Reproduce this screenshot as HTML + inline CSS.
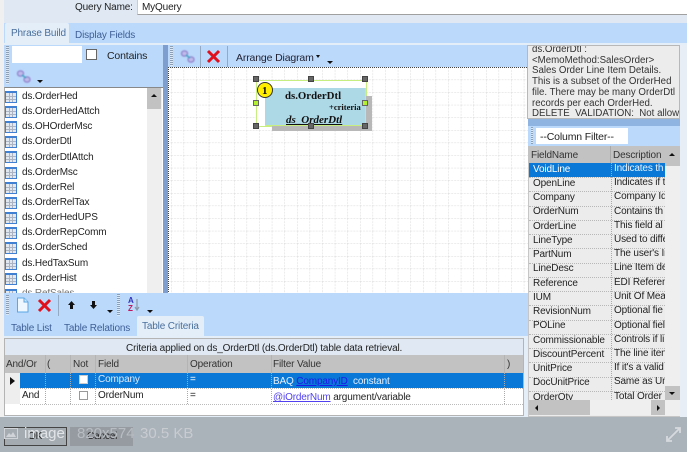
<!DOCTYPE html>
<html><head><meta charset="utf-8">
<style>
html,body{margin:0;padding:0;width:687px;height:452px;overflow:hidden;background:#e8eef5}
*{box-sizing:border-box}
body{font-family:"Liberation Sans",sans-serif;font-size:10px;color:#222;position:relative}
.a{position:absolute}
.t{position:absolute;white-space:nowrap;line-height:12px;letter-spacing:-.15px;filter:blur(.25px)}
.ti{position:absolute;left:5px;width:12px;height:12px;border:1px solid #3f80d2;border-top-width:2px;background:
 linear-gradient(#aab4c2,#aab4c2) 0 3px/100% 1px no-repeat,linear-gradient(#aab4c2,#aab4c2) 0 6px/100% 1px no-repeat,
 linear-gradient(#aab4c2,#aab4c2) 3px 0/1px 100% no-repeat,linear-gradient(#aab4c2,#aab4c2) 6px 0/1px 100% no-repeat,#e2e8f0}
.h{position:absolute;width:6px;height:6px;background:#666;border:1px solid #444}
.rl{position:absolute;left:529px;width:136px;height:1px;border-top:1px dotted #b8b8b8}
.dv{position:absolute;border-left:1px dotted #aaa}
.drop{position:absolute;width:0;height:0;border-left:3px solid transparent;border-right:3px solid transparent;border-top:3px solid #111}
.hd{position:absolute;background:#c2c2c2}
.s{font-family:"Liberation Serif",serif;font-weight:bold;color:#111;letter-spacing:0}
.o{font-size:15px;line-height:16px;letter-spacing:0}
a{color:#1a1ae6;text-decoration:underline}
.chain{filter:blur(.4px)}
</style></head><body>

<!-- top area -->
<div class="a" style="left:0;top:0;width:4px;height:417px;background:#f0f0f0"></div>
<div class="a" style="left:4px;top:0;width:683px;height:23px;background:#dfe8f3"></div>
<div class="a" style="left:137px;top:0;width:550px;height:15px;background:#fff;border-bottom:1px solid #a0a0a0;border-left:1px solid #ccc"></div>
<div class="t" style="left:75px;top:2px">Query Name:</div>
<div class="t" style="left:142px;top:2px">MyQuery</div>

<!-- tab band -->
<div class="a" style="left:4px;top:23px;width:683px;height:20px;background:#bbd9fb"></div>
<div class="a" style="left:5px;top:23px;width:64px;height:21px;background:#e3eef9;border-radius:2px 2px 0 0"></div>
<div class="t" style="left:11px;top:28px;color:#4a6f9c">Phrase Build</div>
<div class="t" style="left:75px;top:30px;color:#3f5f96">Display Fields</div>
<div class="a" style="left:4px;top:43px;width:683px;height:2px;background:#e3eef9"></div>

<!-- left panel toolbar -->
<div class="a" style="left:4px;top:45px;width:160px;height:43px;background:#bbd9fb"></div>
<div class="a" style="left:6px;top:46px;width:3px;height:38px;background:repeating-linear-gradient(#8d9fb4 0 1px,#dbe8f8 1px 2px)"></div>
<div class="a" style="left:12px;top:46px;width:70px;height:17px;background:#fff"></div>
<div class="a" style="left:86px;top:49px;width:11px;height:11px;background:#fff;border:1px solid #666"></div>
<div class="t" style="left:107px;top:50px;font-size:10.5px">Contains</div>
<svg class="a chain" style="left:16px;top:69px" width="16" height="15" viewBox="0 0 16 15"><g fill="#c0bbea" stroke="#9a92d4" stroke-width="1.6"><ellipse cx="4.5" cy="4.5" rx="3" ry="2.6"/><ellipse cx="11" cy="10.500" rx="3" ry="2.6"/></g><path d="M6 6l4 3" stroke="#48a8c8" stroke-width="1.6"/></svg>
<div class="drop" style="left:37px;top:80px"></div>

<!-- table list -->
<div class="a" style="left:4px;top:87px;width:160px;height:206px;background:#fff;border-top:1px solid #888;border-left:1px solid #aaa"></div>
<div class="a" style="left:147px;top:88px;width:15px;height:205px;background:#efefef"></div>
<div class="a" style="left:147px;top:88px;width:14px;height:21px;background:#c2c2c2"></div>
<div class="a" style="left:151px;top:94px;border-left:3px solid transparent;border-right:3px solid transparent;border-bottom:3px solid #111"></div>
<div class="ti" style="top:91px"></div><div class="t" style="left:22px;top:91px">ds.OrderHed</div>
<div class="ti" style="top:106px"></div><div class="t" style="left:22px;top:106px">ds.OrderHedAttch</div>
<div class="ti" style="top:121px"></div><div class="t" style="left:22px;top:121px">ds.OHOrderMsc</div>
<div class="ti" style="top:136px"></div><div class="t" style="left:22px;top:136px">ds.OrderDtl</div>
<div class="ti" style="top:151px"></div><div class="t" style="left:22px;top:152px">ds.OrderDtlAttch</div>
<div class="ti" style="top:167px"></div><div class="t" style="left:22px;top:167px">ds.OrderMsc</div>
<div class="ti" style="top:182px"></div><div class="t" style="left:22px;top:182px">ds.OrderRel</div>
<div class="ti" style="top:197px"></div><div class="t" style="left:22px;top:197px">ds.OrderRelTax</div>
<div class="ti" style="top:212px"></div><div class="t" style="left:22px;top:212px">ds.OrderHedUPS</div>
<div class="ti" style="top:227px"></div><div class="t" style="left:22px;top:227px">ds.OrderRepComm</div>
<div class="ti" style="top:242px"></div><div class="t" style="left:22px;top:242px">ds.OrderSched</div>
<div class="ti" style="top:258px"></div><div class="t" style="left:22px;top:258px">ds.HedTaxSum</div>
<div class="ti" style="top:273px"></div><div class="t" style="left:22px;top:273px">ds.OrderHist</div>
<div class="a" style="left:5px;top:289px;width:142px;height:4px;overflow:hidden"><div class="ti" style="left:0;top:0"></div><div class="t" style="left:17px;top:-1px;color:#777">ds.RefSales</div></div>

<!-- splitter -->
<div class="a" style="left:163px;top:45px;width:5px;height:248px;background:#7f9ed0"></div>

<!-- diagram toolbar -->
<div class="a" style="left:168px;top:45px;width:360px;height:22px;background:#bbd9fb"></div>
<div class="a" style="left:170px;top:46px;width:3px;height:20px;background:repeating-linear-gradient(#8d9fb4 0 1px,#dbe8f8 1px 2px)"></div>
<svg class="a chain" style="left:180px;top:49px" width="16" height="15" viewBox="0 0 16 15"><g fill="#c0bbea" stroke="#9a92d4" stroke-width="1.6"><ellipse cx="4.5" cy="4.5" rx="3" ry="2.6"/><ellipse cx="11" cy="10.500" rx="3" ry="2.6"/></g><path d="M6 6l4 3" stroke="#48a8c8" stroke-width="1.6"/></svg>
<div class="a" style="left:200px;top:46px;width:1px;height:21px;background:#93a9c4"></div>
<svg class="a" style="left:206px;top:49px" width="15" height="15" viewBox="0 0 15 15"><path d="M2 2L13 13M13 2L2 13" stroke="#e0101c" stroke-width="3"/></svg>
<div class="a" style="left:227px;top:46px;width:1px;height:21px;background:#93a9c4"></div>
<div class="t" style="left:236px;top:52px;font-size:10.5px;color:#223">Arrange Diagram</div>
<div class="drop" style="left:316px;top:55px;border-left-width:2.5px;border-right-width:2.5px"></div>
<div class="drop" style="left:327px;top:61px"></div>

<!-- diagram -->
<svg class="a" style="left:168px;top:67px" width="360" height="226"><defs><pattern id="g" x="3" y="0" width="12.6" height="12.6" patternUnits="userSpaceOnUse"><path d="M0 0V12.6M0 0H12.6" stroke="#d8d8d8" stroke-width="1" stroke-dasharray="2 1" fill="none"/></pattern></defs><rect width="360" height="226" fill="#fff"/><rect width="360" height="226" fill="url(#g)"/><path d="M0 .5H360M.5 0V226" stroke="#444" stroke-dasharray="1 1"/></svg>

<div class="a" style="left:256px;top:80px;width:111px;height:47px;background:#fff;border:1px solid #c6ee80"></div>
<div class="a" style="left:272px;top:96px;width:100px;height:35px;background:#b8b8b8"></div>
<div class="a" style="left:265px;top:88px;width:101px;height:38px;background:#add8e6;border-right:1px solid #c6ee80;border-bottom:1px solid #c6ee80"></div>
<div class="t s" style="left:285px;top:90px;font-size:10.8px">ds.OrderDtl</div>
<div class="t s" style="left:329px;top:101px;font-size:8.5px">+criteria</div>
<div class="t s" style="left:286px;top:114px;font-style:italic;font-size:11px;text-decoration:underline">ds_OrderDtl</div>
<div class="h" style="left:253px;top:76px"></div>
<div class="h" style="left:308px;top:76px"></div>
<div class="h" style="left:362px;top:76px"></div>
<div class="h" style="left:253px;top:100px;background:#b2f030;border-color:#666"></div>
<div class="h" style="left:362px;top:100px;background:#b2f030;border-color:#666"></div>
<div class="h" style="left:253px;top:123px"></div>
<div class="h" style="left:308px;top:123px"></div>
<div class="h" style="left:362px;top:123px"></div>
<div class="a" style="left:257px;top:82px;width:16px;height:16px;border-radius:50%;background:#ffee00;border:1px solid #333"></div>
<div class="t s" style="left:262px;top:85px;font-size:11px">1</div>

<!-- right panel -->
<div class="a" style="left:528px;top:45px;width:152px;height:372px;background:#bbd9fb"></div>
<div class="a" style="left:528px;top:118px;width:152px;height:8px;background:#8fb4e2"></div>
<div class="a" style="left:527px;top:45px;width:153px;height:74px;background:#ececec;border:1px solid #b8b8b8;overflow:hidden">
<div class="t" style="left:4px;top:-1px;line-height:10.7px;font-size:9.7px;letter-spacing:0;color:#333">ds.OrderDtl :<br>&lt;MemoMethod:SalesOrder&gt;<br>Sales Order Line Item Details.<br>This is a subset of the OrderHed<br>file. There may be many OrderDtl<br>records per each OrderHed.<br>DELETE&nbsp; VALIDATION:&nbsp; Not allowed</div>
</div>
<div class="a" style="left:531px;top:127px;width:2px;height:17px;background:repeating-linear-gradient(#8d9fb4 0 1px,#dbe8f8 1px 2px)"></div>
<div class="a" style="left:536px;top:128px;width:92px;height:16px;background:#fff"></div>
<div class="t" style="left:540px;top:131px;font-size:10.5px">--Column Filter--</div>

<div class="a" style="left:528px;top:146px;width:152px;height:271px;background:#ececec;border:1px solid #c6c6c6;border-top:0"></div>
<div class="hd" style="left:528px;top:146px;width:137px;height:17px"></div>
<div class="t" style="left:531px;top:150px;color:#333">FieldName</div>
<div class="t" style="left:613px;top:150px;color:#333">Description</div>
<div class="a" style="left:610px;top:146px;width:1px;height:17px;background:#aaa"></div>
<div class="a" style="left:529px;top:163px;width:136px;height:14px;background:#0a78d6"></div>
<div class="dv" style="left:611px;top:163px;height:237px"></div>
<div class="a" style="left:529px;top:163px;width:136px;height:237px;overflow:hidden">
<div class="t" style="left:4px;top:1px;color:#fff">VoidLine</div><div class="t" style="left:85px;top:0;color:#e8f2ff">Indicates th</div>
<div class="rl" style="left:0;top:14px"></div>
<div class="t" style="left:4px;top:15px">OpenLine</div><div class="t" style="left:85px;top:14px">Indicates if t</div>
<div class="rl" style="left:0;top:28px"></div>
<div class="t" style="left:4px;top:29px">Company</div><div class="t" style="left:85px;top:28px">Company Id</div>
<div class="rl" style="left:0;top:43px"></div>
<div class="t" style="left:4px;top:43px">OrderNum</div><div class="t" style="left:85px;top:43px">Contains th</div>
<div class="rl" style="left:0;top:57px"></div>
<div class="t" style="left:4px;top:58px">OrderLine</div><div class="t" style="left:85px;top:57px">This field al</div>
<div class="rl" style="left:0;top:71px"></div>
<div class="t" style="left:4px;top:72px">LineType</div><div class="t" style="left:85px;top:71px">Used to diffe</div>
<div class="rl" style="left:0;top:85px"></div>
<div class="t" style="left:4px;top:86px">PartNum</div><div class="t" style="left:85px;top:85px">The user's In</div>
<div class="rl" style="left:0;top:100px"></div>
<div class="t" style="left:4px;top:100px">LineDesc</div><div class="t" style="left:85px;top:99px">Line Item de</div>
<div class="rl" style="left:0;top:114px"></div>
<div class="t" style="left:4px;top:115px">Reference</div><div class="t" style="left:85px;top:114px">EDI Referen</div>
<div class="rl" style="left:0;top:128px"></div>
<div class="t" style="left:4px;top:129px">IUM</div><div class="t" style="left:85px;top:128px">Unit Of Mea</div>
<div class="rl" style="left:0;top:142px"></div>
<div class="t" style="left:4px;top:143px">RevisionNum</div><div class="t" style="left:85px;top:142px">Optional fie</div>
<div class="rl" style="left:0;top:157px"></div>
<div class="t" style="left:4px;top:157px">POLine</div><div class="t" style="left:85px;top:157px">Optional fiel</div>
<div class="rl" style="left:0;top:171px"></div>
<div class="t" style="left:4px;top:172px">Commissionable</div><div class="t" style="left:85px;top:171px">Controls if li</div>
<div class="rl" style="left:0;top:185px"></div>
<div class="t" style="left:4px;top:186px">DiscountPercent</div><div class="t" style="left:85px;top:185px">The line iten</div>
<div class="rl" style="left:0;top:199px"></div>
<div class="t" style="left:4px;top:200px">UnitPrice</div><div class="t" style="left:85px;top:199px">If it's a valid</div>
<div class="rl" style="left:0;top:214px"></div>
<div class="t" style="left:4px;top:214px">DocUnitPrice</div><div class="t" style="left:85px;top:213px">Same as Un</div>
<div class="rl" style="left:0;top:228px"></div>
<div class="t" style="left:4px;top:229px">OrderQty</div><div class="t" style="left:85px;top:228px">Total Order</div>
</div>
<!-- right scrollbars -->
<div class="a" style="left:665px;top:146px;width:15px;height:270px;background:#efefef"></div>
<div class="a" style="left:665px;top:146px;width:15px;height:20px;background:#c2c2c2"></div>
<div class="a" style="left:669px;top:153px;border-left:3px solid transparent;border-right:3px solid transparent;border-bottom:3px solid #111"></div>
<div class="a" style="left:665px;top:386px;width:15px;height:14px;background:#c2c2c2"></div>
<div class="drop" style="left:669px;top:392px"></div>
<div class="a" style="left:529px;top:400px;width:136px;height:15px;background:#efefef"></div>
<div class="a" style="left:529px;top:400px;width:61px;height:15px;background:#c2c2c2"></div>
<div class="a" style="left:535px;top:405px;border-top:3px solid transparent;border-bottom:3px solid transparent;border-right:3px solid #111"></div>
<div class="a" style="left:651px;top:400px;width:14px;height:15px;background:#c2c2c2"></div>
<div class="a" style="left:657px;top:405px;border-top:3px solid transparent;border-bottom:3px solid transparent;border-left:3px solid #111"></div>

<!-- bottom panel -->
<div class="a" style="left:4px;top:293px;width:524px;height:43px;background:#bbd9fb"></div>
<div class="a" style="left:6px;top:295px;width:3px;height:20px;background:repeating-linear-gradient(#8d9fb4 0 1px,#dbe8f8 1px 2px)"></div>
<svg class="a" style="left:16px;top:297px" width="13" height="16" viewBox="0 0 13 16"><path d="M1.5 1H8l4 4v10H1.5z" fill="#eef6ff" stroke="#5aa6e6"/><path d="M8 1v4h4" fill="#cfe6fb" stroke="#5aa6e6"/></svg>
<svg class="a" style="left:37px;top:298px" width="15" height="15" viewBox="0 0 15 15"><path d="M2 2L13 13M13 2L2 13" stroke="#e0101c" stroke-width="3"/></svg>
<div class="a" style="left:58px;top:295px;width:1px;height:21px;background:#93a9c4"></div>
<svg class="a" style="left:67px;top:300px" width="9" height="10" viewBox="0 0 9 10"><path d="M4.5 1L8 5H6v4H3V5H1z" fill="#111"/></svg>
<svg class="a" style="left:89px;top:300px" width="9" height="10" viewBox="0 0 9 10"><path d="M3 1h3v4h2L4.500 9 1 5h2z" fill="#111"/></svg>
<div class="drop" style="left:107px;top:310px"></div>
<div class="a" style="left:117px;top:294px;width:3px;height:22px;background:repeating-linear-gradient(#8d9fb4 0 1px,#dbe8f8 1px 2px)"></div>
<div class="t" style="left:128px;top:297px;font-size:8px;line-height:7.5px;font-weight:bold;color:#3030c0">A<br><span style="color:#c01860">Z</span></div>
<svg class="a" style="left:134px;top:298px" width="6" height="14" viewBox="0 0 6 14"><path d="M3 1v10M1 9l2 3 2-3" stroke="#8a97a8" stroke-width="1.2" fill="none"/></svg>
<div class="drop" style="left:147px;top:310px"></div>

<div class="t" style="left:11px;top:323px;color:#3f5f96">Table List</div>
<div class="t" style="left:64px;top:323px;color:#3f5f96">Table Relations</div>
<div class="a" style="left:137px;top:316px;width:67px;height:21px;background:#e3eef9;border-radius:2px 2px 0 0"></div>
<div class="t" style="left:142px;top:321px;color:#4a6f9c">Table Criteria</div>

<!-- criteria grid -->
<div class="a" style="left:4px;top:336px;width:524px;height:81px;background:#e3eef9"></div>
<div class="a" style="left:4px;top:338px;width:520px;height:78px;background:#fff;border:1px solid #b4b4b4"></div>
<div class="a" style="left:5px;top:339px;width:518px;height:16px;background:#dfe8f3"></div>
<div class="t" style="left:126px;top:343px;color:#222">Criteria applied on ds_OrderDtl (ds.OrderDtl) table data retrieval.</div>
<div class="hd" style="left:5px;top:355px;width:518px;height:18px"></div>
<div class="t" style="left:6px;top:359px;color:#333">And/Or</div>
<div class="t" style="left:47px;top:359px;color:#333">(</div>
<div class="t" style="left:73px;top:359px;color:#333">Not</div>
<div class="t" style="left:98px;top:359px;color:#333">Field</div>
<div class="t" style="left:190px;top:359px;color:#333">Operation</div>
<div class="t" style="left:273px;top:359px;color:#333">Filter Value</div>
<div class="t" style="left:507px;top:359px;color:#333">)</div>
<div class="a" style="left:45px;top:355px;width:1px;height:18px;background:#b4b4b4"></div>
<div class="a" style="left:70px;top:355px;width:1px;height:18px;background:#b4b4b4"></div>
<div class="a" style="left:95px;top:355px;width:1px;height:18px;background:#b4b4b4"></div>
<div class="a" style="left:187px;top:355px;width:1px;height:18px;background:#b4b4b4"></div>
<div class="a" style="left:271px;top:355px;width:1px;height:18px;background:#b4b4b4"></div>
<div class="a" style="left:504px;top:355px;width:1px;height:18px;background:#b4b4b4"></div>

<div class="a" style="left:5px;top:373px;width:15px;height:31px;background:#eeeeee"></div>
<div class="a" style="left:10px;top:377px;border-top:4px solid transparent;border-bottom:4px solid transparent;border-left:5px solid #111"></div>
<div class="a" style="left:20px;top:373px;width:503px;height:15px;background:#0a78d6"></div>
<div class="a" style="left:20px;top:388px;width:503px;border-top:1px dotted #bbb"></div>
<div class="a" style="left:20px;top:404px;width:503px;border-top:1px dotted #bbb"></div>
<div class="dv" style="left:45px;top:373px;height:31px"></div>
<div class="dv" style="left:70px;top:373px;height:31px"></div>
<div class="dv" style="left:95px;top:373px;height:31px"></div>
<div class="dv" style="left:187px;top:373px;height:31px"></div>
<div class="dv" style="left:271px;top:373px;height:31px"></div>
<div class="dv" style="left:504px;top:373px;height:31px"></div>
<div class="a" style="left:79px;top:375px;width:9px;height:9px;background:#fff;border:1px solid #ccc"></div>
<div class="a" style="left:79px;top:391px;width:9px;height:9px;background:#fff;border:1px solid #999"></div>
<div class="t" style="left:98px;top:374px;color:#dbeaff">Company</div>
<div class="t" style="left:190px;top:374px;color:#fff">=</div>
<div class="t" style="left:273px;top:376px;color:#e6f0ff">BAQ <a>CompanyID</a>&nbsp; constant</div>
<div class="t" style="left:22px;top:390px">And</div>
<div class="t" style="left:98px;top:390px">OrderNum</div>
<div class="t" style="left:190px;top:390px">=</div>
<div class="t" style="left:273px;top:392px"><a style="color:#5040f0">@iOrderNum</a> argument/variable</div>

<!-- bottom overlay -->
<div class="a" style="left:0;top:417px;width:687px;height:35px;background:#aab2ba"></div>
<div class="a" style="left:4px;top:427px;width:63px;height:19px;border:1px solid #444;background:#a4acb2"></div>
<div class="a" style="left:70px;top:427px;width:63px;height:19px;background:#959ba1"></div>
<div class="t" style="left:28px;top:431px;color:#222">OK</div>
<div class="t" style="left:87px;top:431px;color:#222">Cancel</div>
<svg class="a" style="left:4px;top:428px" width="14" height="11" viewBox="0 0 14 11"><rect x=".5" y=".5" width="13" height="10" fill="none" stroke="#d0d4d8"/><path d="M2 9l3-4 2 2 2-3 3 5z" fill="#d0d4d8"/></svg>
<div class="t o" style="left:24px;top:426px;color:#e2e5e8">image</div>
<div class="t o" style="left:77px;top:426px;color:#b8bdc3">820x574</div>
<div class="t o" style="left:140px;top:426px;color:#c8ccd0">30.5 KB</div>
<svg class="a" style="left:666px;top:427px" width="15" height="15" viewBox="0 0 15 15"><path d="M9 1h5v5M14 1L1 14M1 9v5h5" fill="none" stroke="#d6dade" stroke-width="1.8"/></svg>
</body></html>
